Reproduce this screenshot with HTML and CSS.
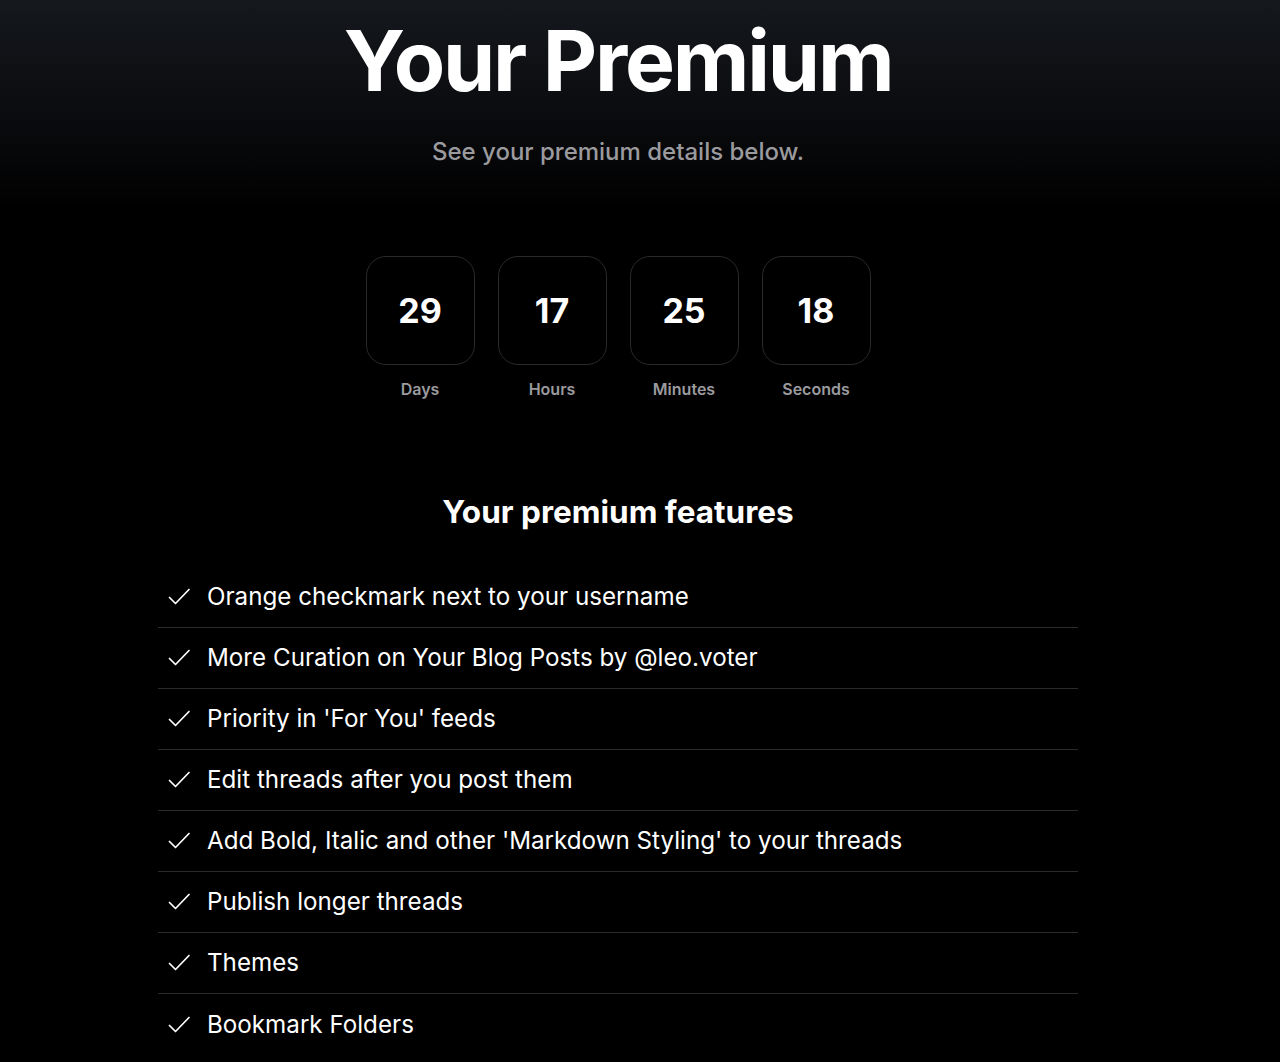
FILE: index.html
```html
<!DOCTYPE html>
<html lang="en">
<head>
<meta charset="utf-8">
<title>Your Premium</title>
<link rel="stylesheet" href="styles.css">
</head>
<body>
<main class="page">
  <header class="hero">
    <h1 class="title">Your Premium</h1>
    <p class="subtitle">See your premium details below.</p>
  </header>

  <section class="countdown">
    <div class="unit"><div class="box">29</div><div class="label">Days</div></div>
    <div class="unit"><div class="box">17</div><div class="label">Hours</div></div>
    <div class="unit"><div class="box">25</div><div class="label">Minutes</div></div>
    <div class="unit"><div class="box">18</div><div class="label">Seconds</div></div>
  </section>

  <section class="features">
    <h2 class="features-title">Your premium features</h2>
    <ul class="feature-list">
      <li class="feature"><svg class="check" viewBox="0 0 24 24"><path d="M2.5 12.5L8.5 18.5L22 4.5"/></svg><span>Orange checkmark next to your username</span></li>
      <li class="feature"><svg class="check" viewBox="0 0 24 24"><path d="M2.5 12.5L8.5 18.5L22 4.5"/></svg><span>More Curation on Your Blog Posts by @leo.voter</span></li>
      <li class="feature"><svg class="check" viewBox="0 0 24 24"><path d="M2.5 12.5L8.5 18.5L22 4.5"/></svg><span>Priority in 'For You' feeds</span></li>
      <li class="feature"><svg class="check" viewBox="0 0 24 24"><path d="M2.5 12.5L8.5 18.5L22 4.5"/></svg><span>Edit threads after you post them</span></li>
      <li class="feature"><svg class="check" viewBox="0 0 24 24"><path d="M2.5 12.5L8.5 18.5L22 4.5"/></svg><span>Add Bold, Italic and other 'Markdown Styling' to your threads</span></li>
      <li class="feature"><svg class="check" viewBox="0 0 24 24"><path d="M2.5 12.5L8.5 18.5L22 4.5"/></svg><span>Publish longer threads</span></li>
      <li class="feature"><svg class="check" viewBox="0 0 24 24"><path d="M2.5 12.5L8.5 18.5L22 4.5"/></svg><span>Themes</span></li>
      <li class="feature"><svg class="check" viewBox="0 0 24 24"><path d="M2.5 12.5L8.5 18.5L22 4.5"/></svg><span>Bookmark Folders</span></li>
    </ul>
  </section>
</main>
</body>
</html>
```

FILE: styles.css
```css
* { box-sizing: border-box; }
html, body { margin: 0; padding: 0; }
body {
  background: #000 linear-gradient(180deg, #15181d 0px, #0a0b0e 120px, #000 210px) no-repeat;
  color: #fff;
  font-family: Inter, "Noto Sans", sans-serif;
  min-height: 1062px;
}
.page {
  width: 920px;
  margin-left: 158px;
  display: flex;
  flex-direction: column;
  align-items: center;
}
.hero {
  display: flex;
  flex-direction: column;
  align-items: center;
  padding-top: 14px;
}
.title {
  margin: 0;
  font-size: 84px;
  font-weight: 700;
  line-height: 94px;
  letter-spacing: -2.2px;
}
.subtitle {
  margin: 28px 0 0;
  font-size: 24px;
  font-weight: 500;
  color: #9b9b9f;
  line-height: 32px;
}
.countdown {
  display: flex;
  gap: 23px;
  margin-top: 88px;
}
.unit {
  display: flex;
  flex-direction: column;
  align-items: center;
  gap: 14px;
}
.box {
  width: 109px;
  height: 109px;
  border: 1px solid #2a2a2c;
  border-radius: 20px;
  display: flex;
  align-items: center;
  justify-content: center;
  font-size: 34px;
  font-weight: 700;
}
.label {
  font-size: 16px;
  font-weight: 600;
  color: #9b9b9f;
  line-height: 20px;
}
.features {
  width: 100%;
  margin-top: 93px;
  display: flex;
  flex-direction: column;
  align-items: center;
}
.features-title {
  margin: 0;
  font-size: 31.5px;
  font-weight: 700;
  line-height: 40px;
}
.feature-list {
  list-style: none;
  margin: 35px 0 0;
  padding: 0;
  width: 100%;
}
.feature {
  display: flex;
  align-items: center;
  gap: 16px;
  height: 61px;
  padding-left: 9px;
  border-bottom: 1px solid #2a2a2c;
  font-size: 24.2px;
  line-height: 30px;
}
.feature:last-child { border-bottom: none; }
.check {
  width: 24px;
  height: 24px;
  flex: none;
  fill: none;
  stroke: #fff;
  stroke-width: 1.7;
  stroke-linecap: round;
  stroke-linejoin: round;
}
```
